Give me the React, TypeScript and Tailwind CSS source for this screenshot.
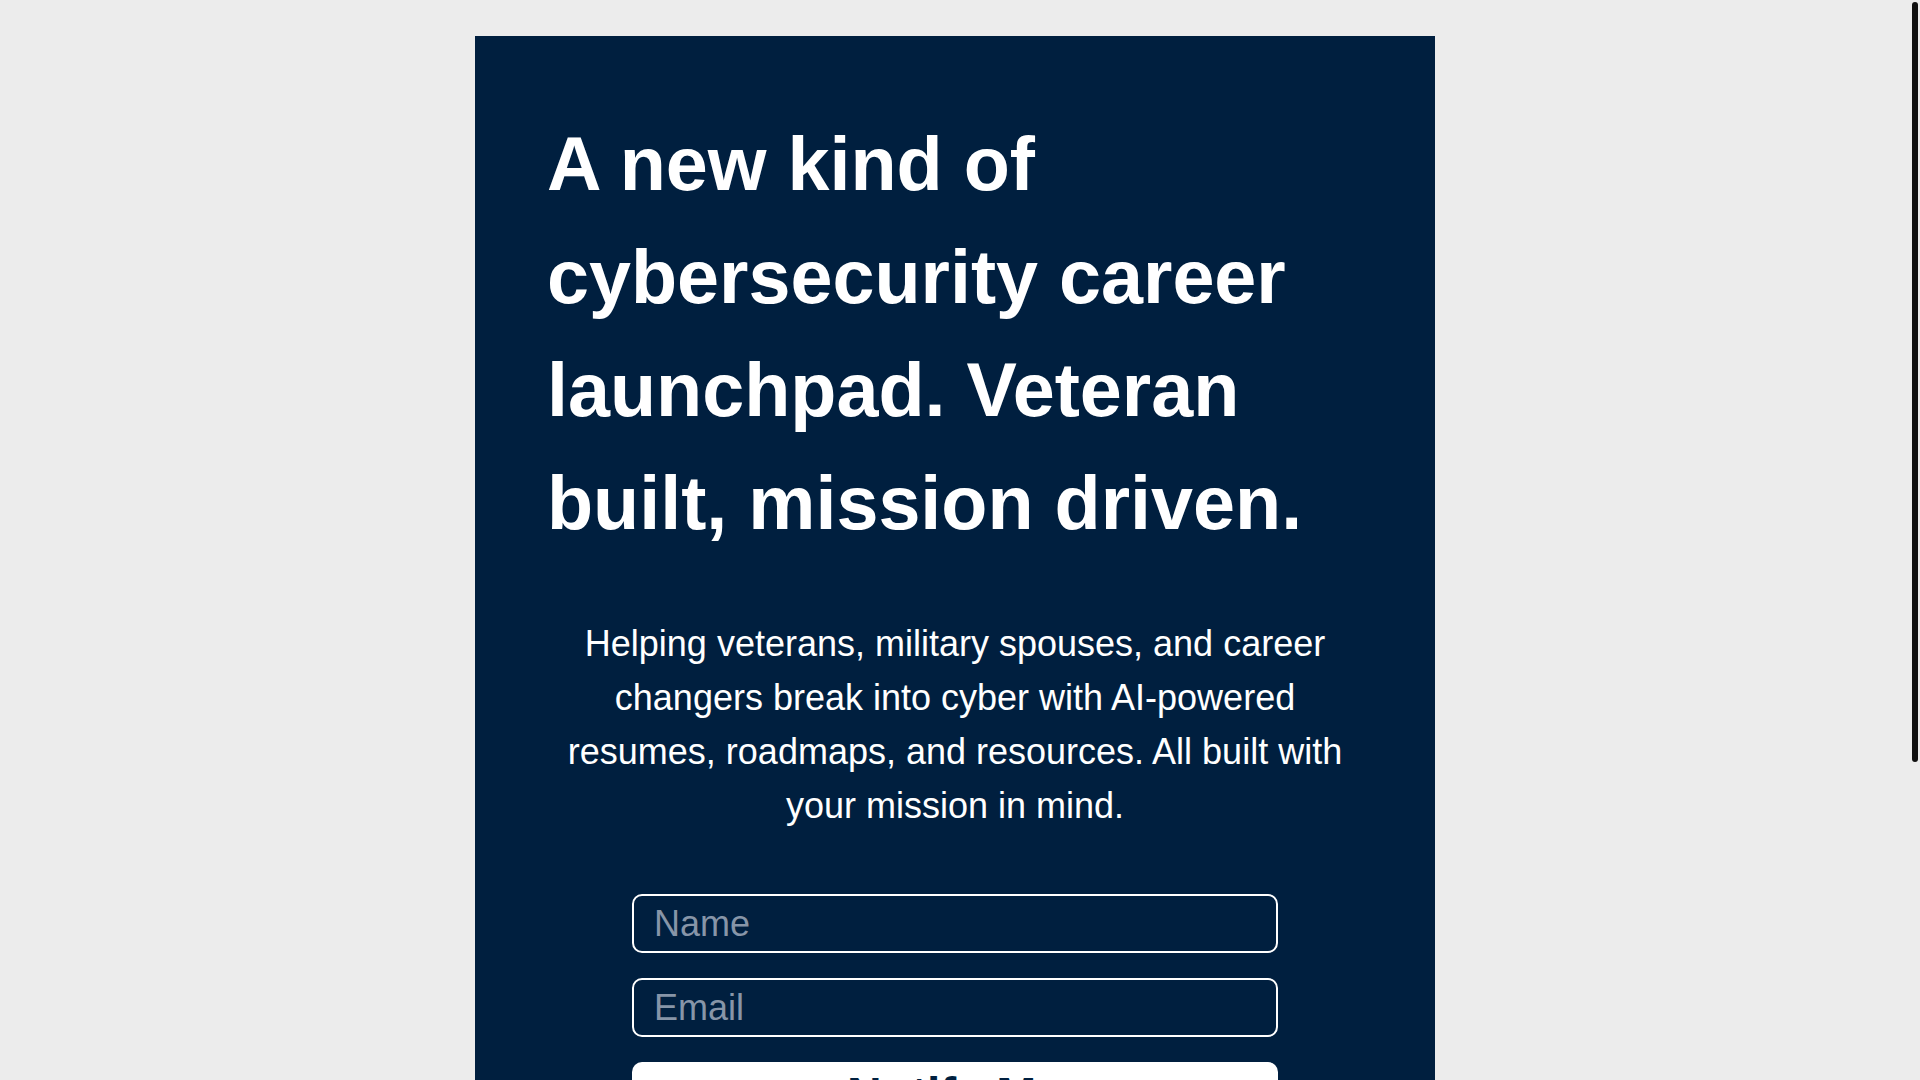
import { useState, FormEvent } from "react";

export default function App() {
  const [name, setName] = useState("");
  const [email, setEmail] = useState("");

  const handleSubmit = (e: FormEvent) => {
    e.preventDefault();
  };

  return (
    <div className="flex h-screen bg-[#ececec] font-['Liberation_Sans',Arial,sans-serif]">
      <div className="flex-1 overflow-y-auto [scrollbar-width:none]">
        <div className="py-[36px]">
          <div className="mx-auto w-[960px] bg-[#001f3f] px-[72px] pt-[72px] pb-[370px]">
            <h1 className="text-[75.5px] leading-[113px] font-bold text-white">
              A new kind of cybersecurity career launchpad. Veteran built, mission driven.
            </h1>

            <p className="mt-[57px] text-center text-[36px] leading-[54px] text-white">
              Helping veterans, military spouses, and career changers break into cyber with AI-powered
              resumes, roadmaps, and resources. All built with your mission in mind.
            </p>

            <form onSubmit={handleSubmit} className="mt-[61px] flex flex-col items-center gap-[25px]">
              <input
                type="text"
                placeholder="Name"
                value={name}
                onChange={(e) => setName(e.target.value)}
                className="h-[59px] w-[646px] rounded-[10px] border-2 border-white bg-transparent px-[20px] text-[36px] text-white placeholder-[#8795a8] outline-none"
              />
              <input
                type="email"
                placeholder="Email"
                value={email}
                onChange={(e) => setEmail(e.target.value)}
                className="h-[59px] w-[646px] rounded-[10px] border-2 border-white bg-transparent px-[20px] text-[36px] text-white placeholder-[#8795a8] outline-none"
              />
              <button
                type="submit"
                className="h-[64px] w-[646px] rounded-[10px] bg-white text-[48px] leading-[55px] font-bold text-[#001f3f]"
              >
                Notify Me
              </button>
            </form>
          </div>
        </div>
      </div>

      {/* scrollbar rail */}
      <div className="w-[10px] shrink-0 pt-[2px] pl-[2px]">
        <div className="h-[760px] w-[6px] rounded-full bg-[#111111]" />
      </div>
    </div>
  );
}
